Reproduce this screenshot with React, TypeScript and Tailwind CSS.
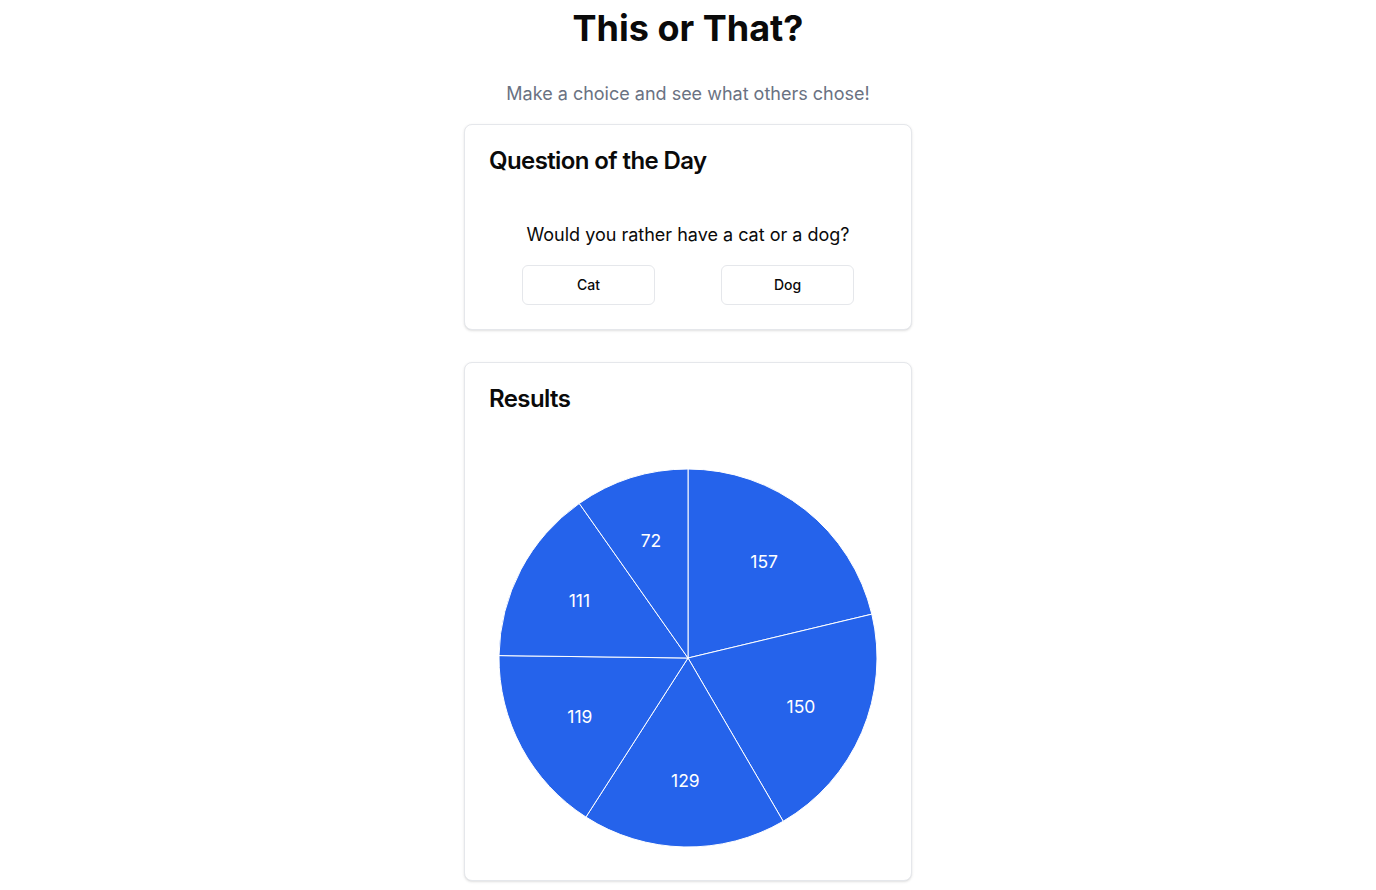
const votes = [157, 150, 129, 119, 111, 72];

const PieChart = () => {
  const cx = 199;
  const cy = 223;
  const r = 189;
  const total = votes.reduce((a, b) => a + b, 0);
  let start = -90;

  const slices = votes.map((v) => {
    const sweep = (v / total) * 360;
    const end = start + sweep;
    const a0 = (start * Math.PI) / 180;
    const a1 = (end * Math.PI) / 180;
    const mid = ((start + sweep / 2) * Math.PI) / 180;
    const x0 = cx + r * Math.cos(a0);
    const y0 = cy + r * Math.sin(a0);
    const x1 = cx + r * Math.cos(a1);
    const y1 = cy + r * Math.sin(a1);
    const large = sweep > 180 ? 1 : 0;
    const d = `M${cx},${cy} L${x0},${y0} A${r},${r} 0 ${large} 1 ${x1},${y1} Z`;
    const lx = cx + r * 0.65 * Math.cos(mid);
    const ly = cy + r * 0.65 * Math.sin(mid);
    start = end;
    return { v, d, lx, ly };
  });

  return (
    <svg width="398" height="421" viewBox="0 0 398 421" className="block">
      {slices.map((s) => (
        <path key={s.v} d={s.d} fill="#2563eb" stroke="#ffffff" strokeWidth="1" />
      ))}
      {slices.map((s) => (
        <text
          key={`l${s.v}`}
          x={s.lx}
          y={s.ly}
          fill="#ffffff"
          fontSize="17.5"
          textAnchor="middle"
          dominantBaseline="central"
        >
          {s.v}
        </text>
      ))}
    </svg>
  );
};

export default function App() {
  return (
    <div className="min-h-screen bg-white font-['Inter',sans-serif] text-[#0a0a0a]">
      <div className="mx-auto max-w-md pt-2">
        <h1 className="text-4xl font-bold text-center">This or That?</h1>
        <p className="mt-8 text-lg text-center text-gray-500">Make a choice and see what others chose!</p>

        {/* QUESTION CARD */}
        <div className="mt-4 rounded-lg border border-gray-200 bg-white shadow-sm">
          <div className="p-6 flex flex-col gap-1.5">
            <h3 className="text-2xl font-semibold leading-none tracking-tight">Question of the Day</h3>
          </div>
          <div className="px-6 pb-6 pt-0">
            <p className="mt-[26px] mb-[18px] text-lg leading-6 text-center">Would you rather have a cat or a dog?</p>
            <div className="flex justify-around">
              <button className="w-1/3 h-10 rounded-md border border-gray-200 bg-white text-sm font-medium">Cat</button>
              <button className="w-1/3 h-10 rounded-md border border-gray-200 bg-white text-sm font-medium">Dog</button>
            </div>
          </div>
        </div>

        {/* RESULTS CARD */}
        <div className="mt-8 mb-2 rounded-lg border border-gray-200 bg-white shadow-sm">
          <div className="p-6 flex flex-col gap-1.5">
            <h3 className="text-2xl font-semibold leading-none tracking-tight">Results</h3>
          </div>
          <div className="px-6 pb-6 pt-0">
            <PieChart />
          </div>
        </div>
      </div>
    </div>
  );
}
